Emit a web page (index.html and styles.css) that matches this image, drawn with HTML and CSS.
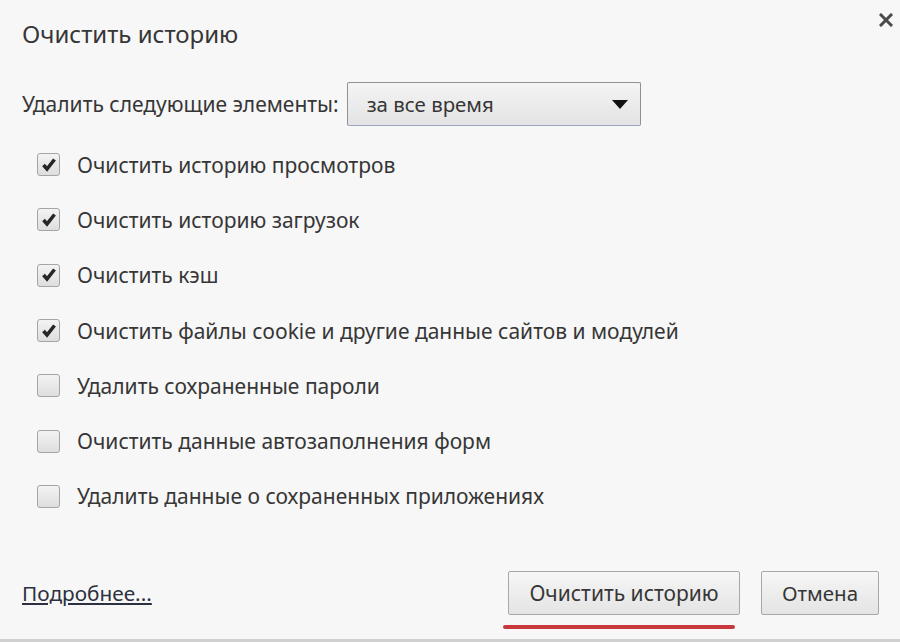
FILE: index.html
```html
<!DOCTYPE html>
<html lang="ru">
<head>
<meta charset="utf-8">
<link rel="stylesheet" href="styles.css">
</head>
<body>
<div class="dialog">
  <button class="close" aria-label="Закрыть">
    <svg width="14" height="14" viewBox="0 0 14 14"><path d="M2 2 L12 12 M12 2 L2 12" stroke="#4a4a4a" stroke-width="3" stroke-linecap="square"/></svg>
  </button>
  <h1 class="title">Очистить историю</h1>
  <div class="range">
    <span class="range-label">Удалить следующие элементы:</span>
    <div class="select">
      <span class="select-value">за все время</span>
      <svg class="select-arrow" width="16" height="9" viewBox="0 0 16 9"><path d="M0 0 H16 L8 9 Z" fill="#111"/></svg>
    </div>
  </div>
  <ul class="options">
    <li class="option"><span class="box checked"><svg viewBox="0 0 16 16" width="16" height="16"><path d="M2.5 8 L6 12 L13.5 2.5" fill="none" stroke="#262626" stroke-width="3.6"/></svg></span>Очистить историю просмотров</li>
    <li class="option"><span class="box checked"><svg viewBox="0 0 16 16" width="16" height="16"><path d="M2.5 8 L6 12 L13.5 2.5" fill="none" stroke="#262626" stroke-width="3.6"/></svg></span>Очистить историю загрузок</li>
    <li class="option"><span class="box checked"><svg viewBox="0 0 16 16" width="16" height="16"><path d="M2.5 8 L6 12 L13.5 2.5" fill="none" stroke="#262626" stroke-width="3.6"/></svg></span>Очистить кэш</li>
    <li class="option"><span class="box checked"><svg viewBox="0 0 16 16" width="16" height="16"><path d="M2.5 8 L6 12 L13.5 2.5" fill="none" stroke="#262626" stroke-width="3.6"/></svg></span>Очистить файлы cookie и другие данные сайтов и модулей</li>
    <li class="option"><span class="box"></span>Удалить сохраненные пароли</li>
    <li class="option"><span class="box"></span>Очистить данные автозаполнения форм</li>
    <li class="option"><span class="box"></span>Удалить данные о сохраненных приложениях</li>
  </ul>
  <div class="footer">
    <a class="more" href="#">Подробнее...</a>
    <div class="actions">
      <div class="primary-wrap">
        <button class="btn">Очистить историю</button>
        <div class="marker"></div>
      </div>
      <button class="btn cancel">Отмена</button>
    </div>
  </div>
</div>
</body>
</html>
```
FILE: styles.css
```css
html, body {
  margin: 0;
  padding: 0;
  background: #f7f7f7;
}
.dialog {
  position: relative;
  width: 900px;
  height: 642px;
  box-sizing: border-box;
  padding: 0 21px 0 22px;
  font-family: "Noto Sans", "Open Sans", sans-serif;
  color: #363636;
  display: flex;
  flex-direction: column;
  border-bottom: 3px solid #d0d0d0;
}
.close {
  position: absolute;
  top: 13px;
  right: 7px;
  border: 0;
  padding: 0;
  background: transparent;
  width: 14px;
  height: 14px;
  display: flex;
}
.title {
  margin: 18px 0 0 0;
  font-size: 24px;
  font-weight: normal;
  line-height: 32px;
  color: #363636;
}
.range {
  display: flex;
  align-items: center;
  margin-top: 32px;
  gap: 8px;
  font-size: 21px;
}
.select {
  width: 294px;
  height: 44px;
  box-sizing: border-box;
  border: 1px solid #8e9297;
  border-bottom-color: #9aa6c0;
  border-radius: 2px;
  background: linear-gradient(#f4f4f4, #e3e3e3);
  display: flex;
  align-items: center;
  justify-content: space-between;
  padding: 0 12px 0 19px;
}
.select-value {
  font-size: 20.4px;
  color: #363636;
}
.options {
  list-style: none;
  margin: 11px 0 0 0;
  padding: 0 0 0 15px;
}
.option {
  display: flex;
  align-items: center;
  height: 55.3px;
  font-size: 21px;
  color: #363636;
}
.box {
  width: 23px;
  height: 23px;
  box-sizing: border-box;
  border: 1px solid #a5a5a5;
  border-radius: 3px;
  background: linear-gradient(#f3f3f3, #dedede);
  margin-right: 17px;
  display: flex;
  align-items: center;
  justify-content: center;
  flex: none;
}
.footer {
  margin-top: auto;
  margin-bottom: 10px;
  display: flex;
  align-items: flex-start;
  justify-content: space-between;
}
.more {
  margin-top: 8px;
  font-size: 20.8px;
  color: #2d3040;
  text-decoration: underline;
}
.actions {
  display: flex;
  gap: 21px;
}
.primary-wrap {
  display: flex;
  flex-direction: column;
}
.btn {
  height: 44px;
  box-sizing: border-box;
  border: 1px solid #a8a8a8;
  border-radius: 2px;
  background: linear-gradient(#f6f6f6, #e4e4e4);
  font-family: inherit;
  font-size: 21px;
  color: #363636;
  padding: 0;
  width: 232px;
}
.btn.cancel {
  width: 118px;
  font-size: 20.5px;
}
.marker {
  margin-top: 10px;
  margin-left: -5px;
  width: 232px;
  height: 4px;
  border-radius: 2px;
  background: #c8393d;
}
```
